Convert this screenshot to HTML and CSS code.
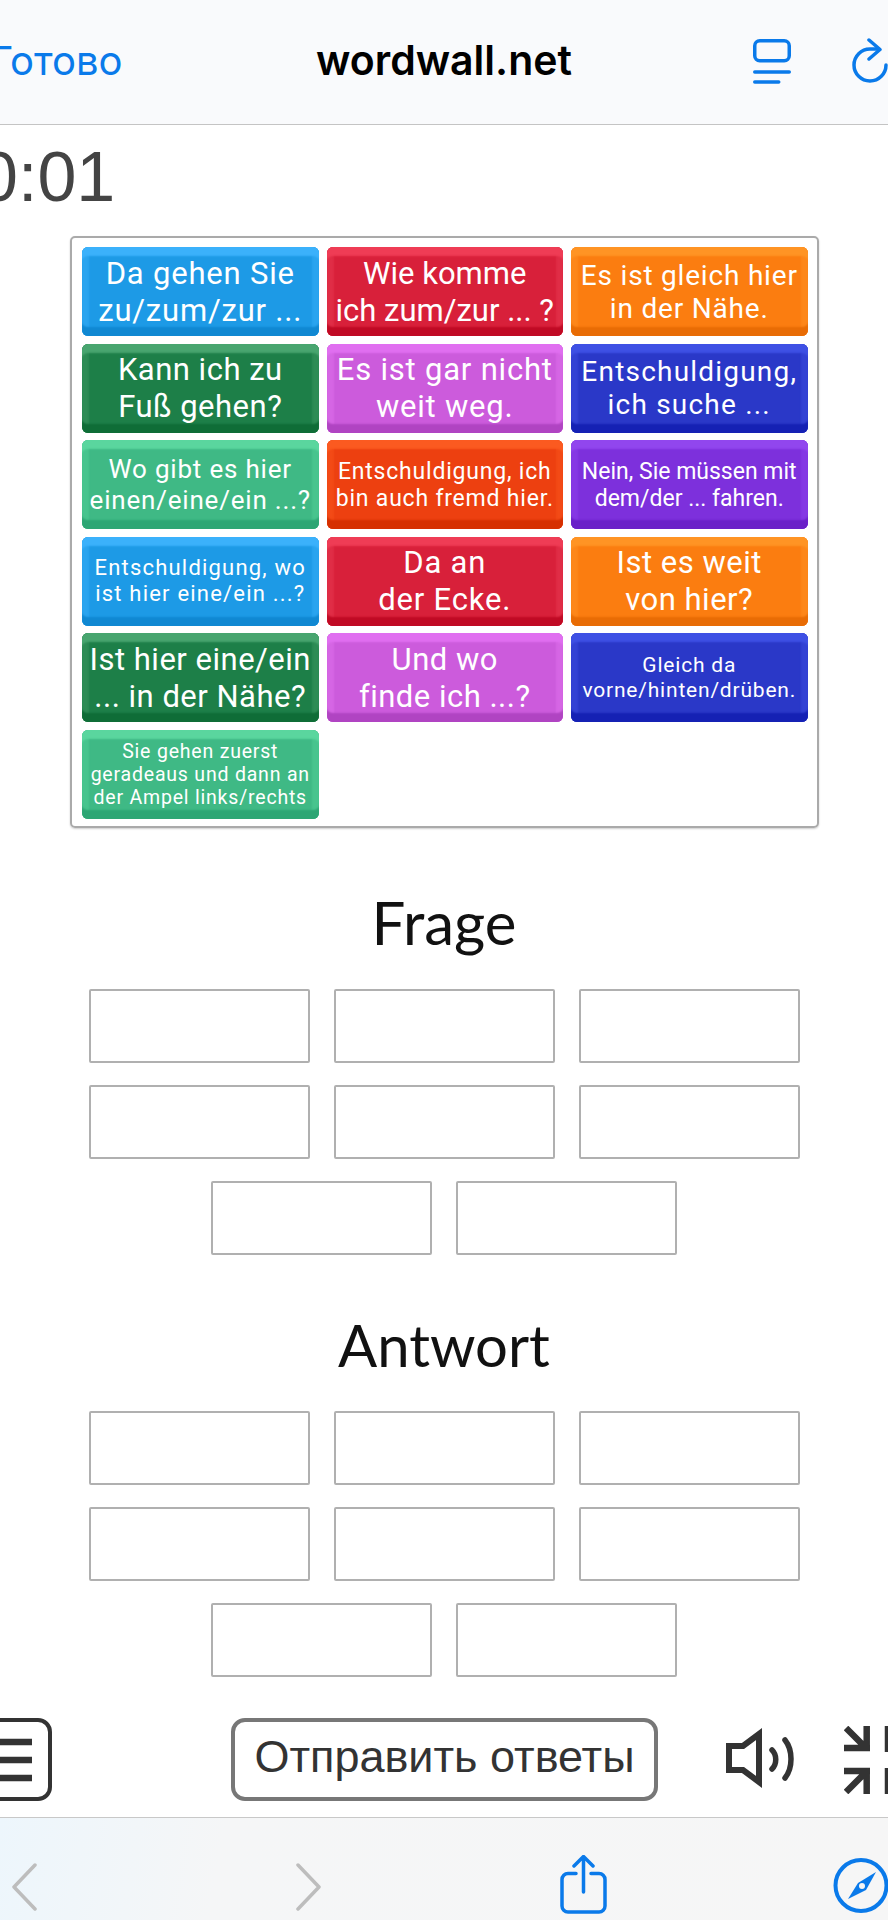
FILE: index.html
```html
<!DOCTYPE html>
<html lang="de">
<head>
    <meta charset="UTF-8">
    <meta name="viewport" content="width=device-width, initial-scale=1.0">
    <title>wordwall.net</title>
    <link rel="stylesheet" href="styles.css">
</head>
<body>
    <header class="topbar">
        <span class="done">Готово</span>
        <span class="site">wordwall.net</span>
        <svg class="reader-icon" width="38" height="46" viewBox="0 0 38 46" fill="none" stroke="#0a7aea" stroke-width="3.5" stroke-linecap="round" stroke-linejoin="round">
            <rect x="1.75" y="1.75" width="34.5" height="20" rx="5"/>
            <path d="M1.75 33h34.5M1.75 43h24"/>
        </svg>
        <svg class="reload-icon" width="36" height="46" viewBox="0 0 36 46" fill="none" stroke="#0a7aea" stroke-width="3.5" stroke-linecap="round" stroke-linejoin="round">
            <path d="M26 11h-8a16 16 0 1 0 16 16"/>
            <path d="M17 2l11 9.500L17 21"/>
        </svg>
    </header>

    <main class="game">
        <div class="timer">0:01</div>

        <div class="tiles">
            <div class="tile blue size37 wide2">Da gehen Sie<br>zu/zum/zur ...</div>
            <div class="tile red size37">Wie komme<br>ich zum/zur ... ?</div>
            <div class="tile orange size33 wide2">Es ist gleich hier<br>in der Nähe.</div>
            <div class="tile green size37 wide1">Kann ich zu<br>Fuß gehen?</div>
            <div class="tile pink size37 wide2">Es ist gar nicht<br>weit weg.</div>
            <div class="tile navy size33 wide3">Entschuldigung,<br>ich suche ...</div>
            <div class="tile mint size31 wide2">Wo gibt es hier<br>einen/eine/ein ...?</div>
            <div class="tile flame size27 wide2">Entschuldigung, ich<br>bin auch fremd hier.</div>
            <div class="tile purple size27">Nein, Sie müssen mit<br>dem/der ... fahren.</div>
            <div class="tile blue size26 wide3">Entschuldigung, wo<br>ist hier eine/ein ...?</div>
            <div class="tile red size37 wide2">Da an<br>der Ecke.</div>
            <div class="tile orange size37 wide1">Ist es weit<br>von hier?</div>
            <div class="tile green size37 wide1">Ist hier eine/ein<br>... in der Nähe?</div>
            <div class="tile pink size37 wide1">Und wo<br>finde ich ...?</div>
            <div class="tile navy size25 wide2">Gleich da<br>vorne/hinten/drüben.</div>
            <div class="tile mint size23 wide2">Sie gehen zuerst<br>geradeaus und dann an<br>der Ampel links/rechts</div>
        </div>

        <h2 class="group-title">Frage</h2>
        <div class="slots">
            <div class="slot"></div><div class="slot"></div><div class="slot"></div>
            <div class="slot"></div><div class="slot"></div><div class="slot"></div>
            <div class="slot"></div><div class="slot"></div>
        </div>

        <h2 class="group-title answer">Antwort</h2>
        <div class="slots">
            <div class="slot"></div><div class="slot"></div><div class="slot"></div>
            <div class="slot"></div><div class="slot"></div><div class="slot"></div>
            <div class="slot"></div><div class="slot"></div>
        </div>

        <div class="controls">
            <div class="menu-btn">
                <svg width="33" height="44" viewBox="0 0 33 44" fill="none" stroke="#333" stroke-width="6.5">
                    <path d="M0 4h33M0 22h33M0 40h33"/>
                </svg>
            </div>
            <button class="submit" type="button">Отправить ответы</button>
            <svg class="sound-icon" width="72" height="60" viewBox="0 0 72 60" fill="none" stroke="#333" stroke-width="6">
                <path d="M4 18h14L34 6v48L18 42H4z"/>
                <path d="M47 22c5 5 5 14 0 19" stroke-width="5.500" stroke-linecap="round"/>
                <path d="M60 12c8 10 8 28 0 38" stroke-width="5.500" stroke-linecap="round"/>
            </svg>
            <svg class="collapse-icon" width="44" height="68" viewBox="0 0 44 68" fill="none" stroke="#333" stroke-width="6.5">
                <path d="M2 2l19 19M0 22h26M22.700 0v25"/>
                <path d="M2 66l19-19M0 45h26M22.700 42v26"/>
                <path d="M44 0v26M44 42v26"/>
            </svg>
        </div>
    </main>

    <footer class="toolbar">
        <svg class="tool-back" width="26" height="48" viewBox="0 0 26 48" fill="none" stroke="#bdbdbd" stroke-width="3.5" stroke-linecap="round" stroke-linejoin="round">
            <path d="M24 2L3 24l21 22"/>
        </svg>
        <svg class="tool-next" width="26" height="48" viewBox="0 0 26 48" fill="none" stroke="#bdbdbd" stroke-width="3.5" stroke-linecap="round" stroke-linejoin="round">
            <path d="M2 2l21 22L2 46"/>
        </svg>
        <svg class="tool-share" width="48" height="60" viewBox="0 0 48 60" fill="none" stroke="#0a7aea" stroke-width="3.5" stroke-linecap="round" stroke-linejoin="round">
            <path d="M23.500 37V2M14 11l9.500-9.500L33 11"/>
            <path d="M16 18.500H8a6 6 0 0 0-6 6V51a6 6 0 0 0 6 6h31a6 6 0 0 0 6-6V24.500a6 6 0 0 0-6-6h-8"/>
        </svg>
        <svg class="tool-compass" width="56" height="58" viewBox="0 0 56 58">
            <circle cx="28" cy="28.500" r="25.500" fill="none" stroke="#0a7aea" stroke-width="4"/>
            <path d="M43 15L33 33 15 42l10-16z" fill="#0a7aea"/>
            <circle cx="29" cy="29" r="3" fill="#f6f6f6"/>
        </svg>
    </footer>
</body>
</html>
```

FILE: styles.css
```css
html, body {
    margin: 0;
    padding: 0;
}
body {
    width: 888px;
    height: 1920px;
    overflow: hidden;
    background-color: white;
    font-family: "Liberation Sans", Arial, sans-serif;
    display: flex;
    flex-direction: column;
}

/* browser bar */
.topbar {
    height: 125px;
    flex: none;
    box-sizing: border-box;
    background-color: #f9fafc;
    border-bottom: 1px solid #c4c4c4;
    display: flex;
    align-items: center;
    position: relative;
}
.done {
    margin-left: -10px;
    margin-top: -4px;
    font-family: Inter, sans-serif;
    font-size: 40px;
    color: #0a7aea;
}
.site {
    position: absolute;
    left: 316px;
    top: 36px;
    font-family: Inter, sans-serif;
    font-size: 41px;
    line-height: 48px;
    font-weight: 600;
    color: black;
}
.reader-icon {
    position: absolute;
    left: 753px;
    top: 39px;
}
.reload-icon {
    position: absolute;
    left: 852px;
    top: 38px;
}

.game {
    flex: 1;
    display: flex;
    flex-direction: column;
}
.timer {
    height: 111px;
    margin-left: -21px;
    font-size: 70px;
    line-height: 104px;
    color: #444;
}

/* word tiles */
.tiles {
    width: 749px;
    height: 592px;
    box-sizing: border-box;
    margin-left: 70px;
    padding: 9px 10px;
    border: 2px solid #aaa;
    border-radius: 5px;
    display: grid;
    grid-template-columns: repeat(3, 236.5px);
    grid-auto-rows: 89px;
    column-gap: 8px;
    row-gap: 7.6px;
    align-content: start;
    font-family: Roboto, sans-serif;
    box-shadow: 0 1px 2px rgba(0,0,0,0.2);
}
.tile {
    display: flex;
    align-items: center;
    justify-content: center;
    text-align: center;
    color: white;
    border-radius: 6px;
    white-space: nowrap;
    background-color: var(--main);
    box-shadow: inset 0 10px 2px -1px var(--top), inset 0 -10px 2px -1px var(--bottom), inset 8px 0 2px -1px var(--side), inset -8px 0 2px -1px var(--side);
}
.size37 { font-size: 31px; line-height: 37px; }
.size33 { font-size: 28px; line-height: 33px; }
.size31 { font-size: 26px; line-height: 31px; }
.size27 { font-size: 23px; line-height: 27px; }
.size26 { font-size: 22px; line-height: 26px; }
.size25 { font-size: 21px; line-height: 25px; }
.size23 { font-size: 19.500px; line-height: 23px; }
.wide1 { letter-spacing: 0.5px; }
.wide2 { letter-spacing: 0.8px; }
.wide3 { letter-spacing: 1.2px; }
.blue { --main: #1d9ae6; --top: #3bb1fb; --side: #2aa4ef; --bottom: #1088d2; }
.red { --main: #d8203a; --top: #ef3c55; --side: #e02d46; --bottom: #c00a24; }
.orange { --main: #fb7d10; --top: #ff9424; --side: #fd871a; --bottom: #e86c05; }
.green { --main: #1d7f48; --top: #48a56f; --side: #2d8c55; --bottom: #0f6d37; }
.pink { --main: #cc5bdc; --top: #e06ff0; --side: #d566e4; --bottom: #b044c2; }
.navy { --main: #2a38c8; --top: #3e50e4; --side: #3342d4; --bottom: #1521b4; }
.mint { --main: #3fb985; --top: #5ad69e; --side: #48c48e; --bottom: #2da674; }
.flame { --main: #ed4010; --top: #fb5a20; --side: #f34a16; --bottom: #d63000; }
.purple { --main: #7d30dc; --top: #9146ee; --side: #8538e4; --bottom: #6a20c8; }

/* drop slots */
.group-title {
    margin: 0;
    height: 72px;
    font-family: Lato, sans-serif;
    font-size: 60px;
    line-height: 72px;
    font-weight: 400;
    text-align: center;
    color: #111;
    margin-top: 58px;
    margin-bottom: 31px;
}
.group-title.answer {
    margin-top: 54px;
    margin-bottom: 30px;
    font-size: 58px;
}
.slots {
    width: 712px;
    margin-left: 88px;
    display: flex;
    flex-wrap: wrap;
    justify-content: center;
    gap: 22px 24px;
}
.slot {
    width: 221px;
    height: 74px;
    box-sizing: border-box;
    border: 2px solid #b0b0b0;
    border-radius: 2px;
}

/* bottom controls */
.controls {
    position: relative;
    height: 83px;
    margin-top: 41px;
}
.menu-btn {
    position: absolute;
    left: -30px;
    top: 0;
    width: 82px;
    height: 83px;
    box-sizing: border-box;
    border: 4px solid #333;
    border-radius: 14px;
    display: flex;
    align-items: center;
    justify-content: flex-end;
    padding-right: 16px;
}
.submit {
    position: absolute;
    left: 231px;
    top: 0;
    width: 427px;
    height: 83px;
    box-sizing: border-box;
    background-color: white;
    border: 4px solid #777;
    border-radius: 14px;
    font-family: "Liberation Sans", Arial, sans-serif;
    font-size: 45px;
    color: #333;
    padding: 0 0 6px;
}
.sound-icon {
    position: absolute;
    left: 725px;
    top: 10px;
}
.collapse-icon {
    position: absolute;
    left: 844px;
    top: 8px;
}

/* safari toolbar */
.toolbar {
    height: 103px;
    flex: none;
    box-sizing: border-box;
    border-top: 1px solid #c8c8c8;
    background: linear-gradient(100deg, #edf6fc 0, #f5f6f7 25%, #f6f6f6 100%);
    position: relative;
}
.toolbar svg {
    position: absolute;
}
.tool-back { left: 11px; top: 45px; }
.tool-next { left: 296px; top: 45px; }
.tool-share { left: 560px; top: 37px; }
.tool-compass { left: 833px; top: 39px; }
```
